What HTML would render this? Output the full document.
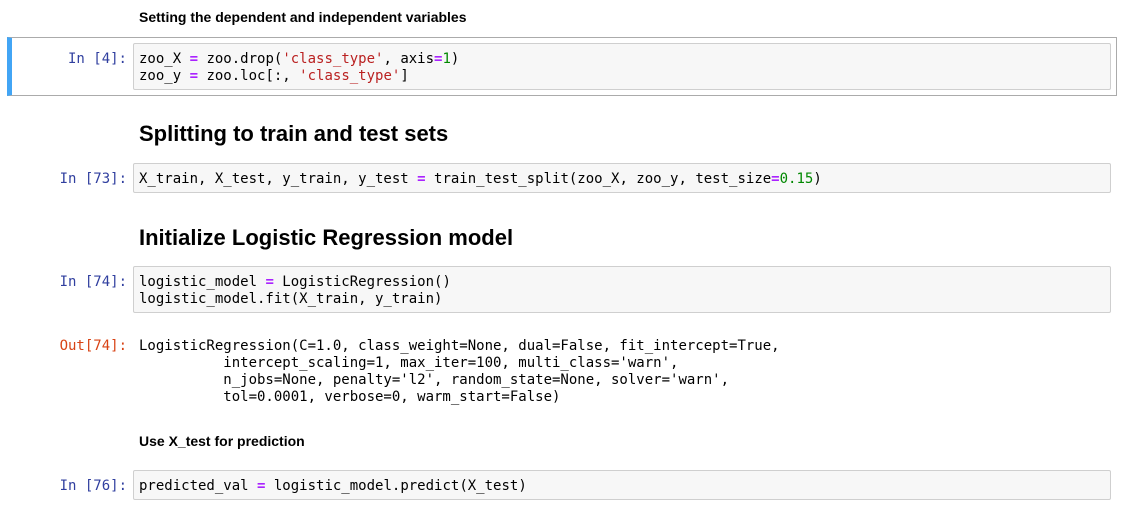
<!DOCTYPE html>
<html><head><style>
body{margin:0;width:1123px;height:513px;background:#fff;position:relative;overflow:hidden;font-family:"Liberation Sans",sans-serif;}
.a{position:absolute;}
.sel{left:7px;top:37px;width:1110px;height:59px;border:1px solid #ababab;border-left:5px solid #42a5f5;box-sizing:border-box;}
.box{position:absolute;left:133px;width:978px;background:#f7f7f7;border:1px solid #cfcfcf;border-radius:2px;box-sizing:border-box;}
pre{margin:0;font-family:"DejaVu Sans Mono",monospace;font-size:14px;line-height:17px;color:#000;}
.code{position:absolute;left:139px;}
.p{position:absolute;right:996px;font-family:"DejaVu Sans Mono",monospace;font-size:14px;line-height:17px;color:#303f9f;white-space:pre;}
.o{color:#d84315;}
.s{color:#ba2121}.op{color:#aa22ff;font-weight:bold}.n{color:#008800}
h{position:absolute;left:139px;font-weight:bold;color:#000;}
</style></head><body>
<h style="top:9px;font-size:14px;">Setting the dependent and independent variables</h>
<div class="a sel"></div>
<div class="box" style="top:43px;height:47px"></div>
<div class="p" style="top:51px">In [4]:</div>
<pre class="code" style="top:51px">zoo_X <span class="op">=</span> zoo.drop(<span class="s">'class_type'</span>, axis<span class="op">=</span><span class="n">1</span>)
zoo_y <span class="op">=</span> zoo.loc[:, <span class="s">'class_type'</span>]</pre>

<h style="top:121px;font-size:22px;">Splitting to train and test sets</h>
<div class="box" style="top:163px;height:30px"></div>
<div class="p" style="top:171px">In [73]:</div>
<pre class="code" style="top:171px">X_train, X_test, y_train, y_test <span class="op">=</span> train_test_split(zoo_X, zoo_y, test_size<span class="op">=</span><span class="n">0.15</span>)</pre>

<h style="top:225px;font-size:22px;">Initialize Logistic Regression model</h>
<div class="box" style="top:266px;height:47px"></div>
<div class="p" style="top:274px">In [74]:</div>
<pre class="code" style="top:274px">logistic_model <span class="op">=</span> LogisticRegression()
logistic_model.fit(X_train, y_train)</pre>

<div class="p o" style="top:338px">Out[74]:</div>
<pre class="code" style="top:338px">LogisticRegression(C=1.0, class_weight=None, dual=False, fit_intercept=True,
          intercept_scaling=1, max_iter=100, multi_class='warn',
          n_jobs=None, penalty='l2', random_state=None, solver='warn',
          tol=0.0001, verbose=0, warm_start=False)</pre>

<h style="top:433px;font-size:14px;">Use X_test for prediction</h>
<div class="box" style="top:470px;height:30px"></div>
<div class="p" style="top:478px">In [76]:</div>
<pre class="code" style="top:478px">predicted_val <span class="op">=</span> logistic_model.predict(X_test)</pre>
</body></html>
